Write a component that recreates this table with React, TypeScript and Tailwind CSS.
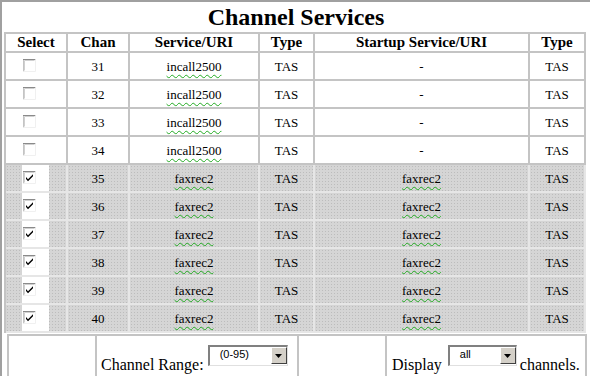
import React from 'react';

type Row = { chan: number; service: string; startup: string; selected: boolean };

const rows: Row[] = [
  { chan: 31, service: 'incall2500', startup: '-', selected: false },
  { chan: 32, service: 'incall2500', startup: '-', selected: false },
  { chan: 33, service: 'incall2500', startup: '-', selected: false },
  { chan: 34, service: 'incall2500', startup: '-', selected: false },
  { chan: 35, service: 'faxrec2', startup: 'faxrec2', selected: true },
  { chan: 36, service: 'faxrec2', startup: 'faxrec2', selected: true },
  { chan: 37, service: 'faxrec2', startup: 'faxrec2', selected: true },
  { chan: 38, service: 'faxrec2', startup: 'faxrec2', selected: true },
  { chan: 39, service: 'faxrec2', startup: 'faxrec2', selected: true },
  { chan: 40, service: 'faxrec2', startup: 'faxrec2', selected: true },
];

const cols = 'grid grid-cols-[62px_62px_130px_55px_215px_56px]';
const wavy = 'underline decoration-wavy decoration-[#22aa22] decoration-1 underline-offset-[3px]';

const CheckBox: React.FC<{ checked: boolean }> = ({ checked }) => (
  <svg width="13" height="13" viewBox="0 0 13 13" className="block">
    <rect x="0" y="0" width="13" height="13" fill="#ffffff" />
    <path d="M0 12.5V0.5H12.5" stroke="#8a8a8a" fill="none" />
    <path d="M1.5 11.5V1.5H11.5" stroke="#d0d0d0" fill="none" />
    <path d="M0.5 12.5H12.5V0.5" stroke="#f0f0f0" fill="none" />
    {checked && <path d="M3 6l2 2.2L10 3.2v2L5 10.2 3 8z" fill="#000000" />}
  </svg>
);

const Dropdown: React.FC<{ value: string; width: string }> = ({ value, width }) => (
  <div
    className={`${width} h-[21px] flex items-start bg-white border-t-2 border-l-2 border-b border-r border-t-[#808080] border-l-[#808080] border-b-[#e0e0e0] border-r-[#e0e0e0]`}
  >
    <span className="flex-1 pl-[10px] pt-[1px] text-[11px] leading-[13px] text-black font-['Liberation_Sans',Arial,sans-serif]">
      {value}
    </span>
    <span className="w-[16px] h-[17px] flex items-center justify-center bg-[#d4d0c8] border border-t-white border-l-white border-b-[#404040] border-r-[#404040]">
      <svg width="7" height="4" viewBox="0 0 7 4">
        <path d="M0 0h7L3.5 4z" fill="#000" />
      </svg>
    </span>
  </div>
);

const App: React.FC = () => {
  const hd =
    "h-[19px] flex items-center justify-center border-r-2 border-b-2 border-[#c4c4c4] text-[15px] font-bold leading-none font-['Times_New_Roman','Liberation_Serif','DejaVu_Serif',serif]";
  return (
    <div className="w-[590px] h-[376px] overflow-hidden bg-white border-t-2 border-l-2 border-[#a0a0a0] font-['Liberation_Serif','Times_New_Roman',serif] text-black">
      <div className="h-[30px] flex items-center justify-center text-[24px] font-bold leading-none">
        Channel Services
      </div>
      <div className="ml-[2px] w-[582px] border-t-2 border-l-2 border-[#c4c4c4]">
        <div className={cols}>
          {['Select', 'Chan', 'Service/URI', 'Type', 'Startup Service/URI', 'Type'].map((h, i) => (
            <div key={i} className={hd}>
              {h}
            </div>
          ))}
        </div>
        {rows.map((r) => {
          const grey = r.selected;
          const cell = `h-[28px] flex items-center justify-center border-r-2 border-b-2 text-[13px] leading-none font-['Times_New_Roman','Liberation_Serif','DejaVu_Serif',serif] ${
            grey
              ? 'border-[#e6e6e6] bg-[#d5d5d5] bg-[radial-gradient(#bcbcbc_0.6px,transparent_0.8px)] bg-[length:3px_3px]'
              : 'border-[#c4c4c4] bg-white'
          }`;
          return (
            <div key={r.chan} className={cols}>
              <div className={`${cell} !items-stretch !justify-start`}>
                <div className={`ml-[16px] w-[27px] pl-[1px] pt-[6px] ${grey ? 'bg-white' : ''}`}>
                  <CheckBox checked={r.selected} />
                </div>
              </div>
              <div className={cell}>{r.chan}</div>
              <div className={cell}>
                <span className={wavy}>{r.service}</span>
              </div>
              <div className={cell}>TAS</div>
              <div className={cell}>{r.startup === '-' ? '-' : <span className={wavy}>{r.startup}</span>}</div>
              <div className={cell}>TAS</div>
            </div>
          );
        })}
      </div>
      <div className="ml-[5px] mt-[1px] w-[580px] flex h-[50px] border-t-2 border-l-2 border-[#c4c4c4] text-[16px] leading-none">
        <div className="w-[88px] border-r-2 border-[#c4c4c4]" />
        <div className="w-[202px] border-r-2 border-[#c4c4c4] flex items-start pt-[9px] pl-[4px]">
          <span className="mt-[12px]">Channel Range:</span>
          <span className="ml-[4px]">
            <Dropdown value="(0-95)" width="w-[80px]" />
          </span>
        </div>
        <div className="w-[88px] border-r-2 border-[#c4c4c4]" />
        <div className="flex-1 border-r-2 border-[#c4c4c4] flex items-start pt-[8px] pl-[5px]">
          <span className="mt-[13px]">Display</span>
          <span className="ml-[6px] mt-[1px]">
            <Dropdown value="all" width="w-[69px]" />
          </span>
          <span className="mt-[13px] ml-[3px]">channels.</span>
        </div>
      </div>
    </div>
  );
};

export default App;
